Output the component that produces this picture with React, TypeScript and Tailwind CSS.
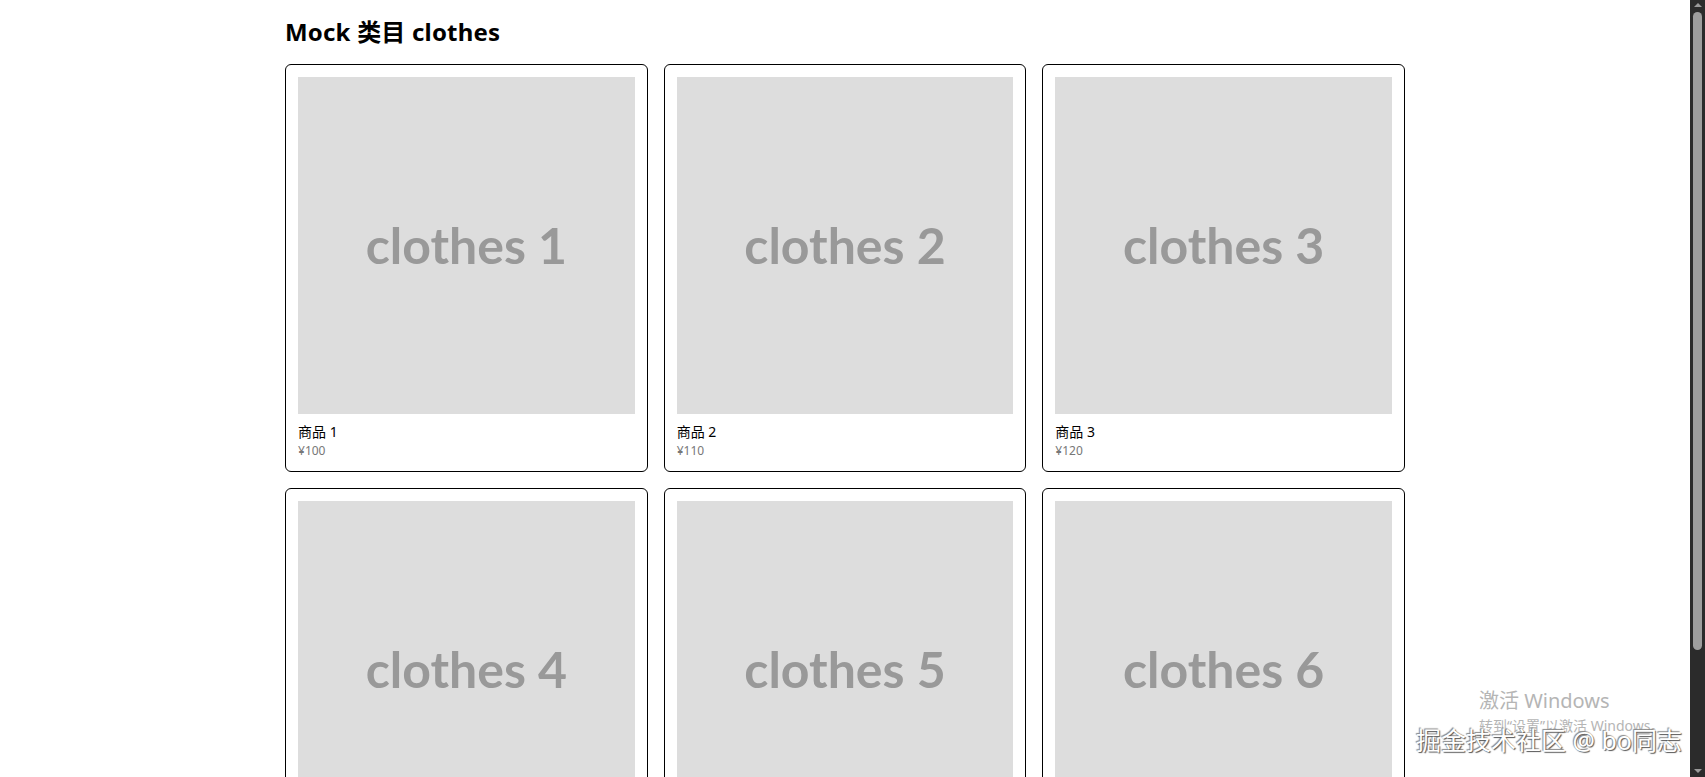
import React from "react";

const items = [1, 2, 3, 4, 5, 6].map((i) => ({ id: i, name: `商品 ${i}`, price: 90 + i * 10 }));

export default function App() {
  return (
    <div className="relative flex h-[777px] w-full overflow-hidden bg-white font-['Noto_Sans','Noto_Sans_CJK_SC',sans-serif]">
      <main className="flex-1 overflow-hidden">
        <div className="mx-auto max-w-[1120px] pt-4">
          <h2 className="mb-4 text-[24px] font-bold leading-8 tracking-[0.2px] text-black">Mock 类目 clothes</h2>
          <div className="grid grid-cols-3 gap-4">
            {items.map((it) => (
              <div key={it.id} className="rounded-md border border-black p-3">
                <div className="flex aspect-square items-center justify-center bg-[#dddddd] font-['Lato',sans-serif] text-[50px] font-bold text-[#999999]">
                  clothes {it.id}
                </div>
                <div className="mt-2 text-[14px] font-normal leading-[20px] text-black">{it.name}</div>
                <div className="text-[12px] leading-[17px] text-[#777777]">¥{it.price}</div>
              </div>
            ))}
          </div>
        </div>
      </main>
      <div className="flex w-[15px] flex-col items-center bg-[#2b2b2b]">
        <div className="mt-[3px] h-0 w-0 border-x-[4px] border-b-[4px] border-x-transparent border-b-[#9a9a9a]" />
        <div className="mt-[5px] h-[638px] w-[9px] rounded-full bg-[#9e9e9e]" />
        <div className="flex-1" />
        <div className="mb-[4px] h-0 w-0 border-x-[4px] border-t-[4px] border-x-transparent border-t-[#9a9a9a]" />
      </div>
      <div className="pointer-events-none absolute left-[1479px] top-[689px] text-[20px] leading-6 text-[#b5b5b5]">激活 Windows</div>
      <div className="pointer-events-none absolute left-[1479px] top-[716px] text-[14px] leading-5 text-[#b5b5b5]">转到“设置”以激活 Windows。</div>
      <div className="pointer-events-none absolute left-[1416px] top-[724px] text-[25px] leading-8 text-white [text-shadow:1px_1px_1px_#555,-1px_-1px_1px_#888]">掘金技术社区 @ bo同志</div>
    </div>
  );
}
